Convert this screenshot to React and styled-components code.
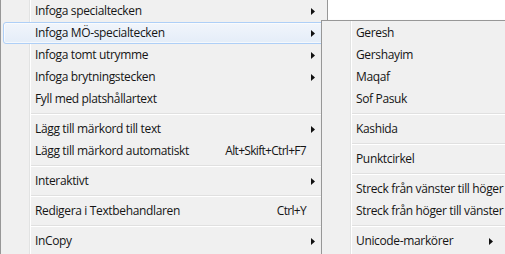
import React from "react";
import styled, { createGlobalStyle } from "styled-components";

const GlobalStyle = createGlobalStyle`
  html, body {
    margin: 0;
    padding: 0;
    background: #ffffff;
    overflow: hidden;
  }
  body {
    font-family: "Segoe UI", "Open Sans", "Noto Sans", sans-serif;
    font-size: 12px;
    letter-spacing: -0.35px;
    color: #151515;
  }
`;

const mainItems = [
  { label: "Infoga specialtecken", sub: true },
  { label: "Infoga MÖ-specialtecken", sub: true, active: true },
  { label: "Infoga tomt utrymme", sub: true },
  { label: "Infoga brytningstecken", sub: true },
  { label: "Fyll med platshållartext" },
  { sep: true },
  { label: "Lägg till märkord till text", sub: true },
  { label: "Lägg till märkord automatiskt", shortcut: "Alt+Skift+Ctrl+F7" },
  { sep: true },
  { label: "Interaktivt", sub: true },
  { sep: true },
  { label: "Redigera i Textbehandlaren", shortcut: "Ctrl+Y" },
  { sep: true },
  { label: "InCopy", sub: true },
];

const subItems = [
  { label: "Geresh" },
  { label: "Gershayim" },
  { label: "Maqaf" },
  { label: "Sof Pasuk" },
  { sep: true },
  { label: "Kashida" },
  { sep: true },
  { label: "Punktcirkel" },
  { sep: true },
  { label: "Streck från vänster till höger" },
  { label: "Streck från höger till vänster" },
  { sep: true },
  { label: "Unicode-markörer", sub: true },
];

function Arrow() {
  return (
    <ArrowIcon width="4" height="7" viewBox="0 0 4 7">
      <path d="M0 0 L4 3.5 L0 7 Z" fill="#111" />
    </ArrowIcon>
  );
}

function MenuList({ items, arrowWidth, arrowPad }) {
  return items.map((item, i) =>
    item.sep ? (
      <Separator key={i} />
    ) : (
      <Item key={i} $active={item.active}>
        <Label>{item.label}</Label>
        <Shortcut>{item.shortcut}</Shortcut>
        <ArrowCell $width={arrowWidth} $pad={arrowPad}>
          {item.sub && <Arrow />}
        </ArrowCell>
      </Item>
    )
  );
}

export default function App() {
  return (
    <>
      <GlobalStyle />
      <Screen>
        <MainMenu>
          <MenuList items={mainItems} arrowWidth={18} arrowPad={9} />
        </MainMenu>
        <SubMenu>
          <MenuList items={subItems} arrowWidth={36} arrowPad={28} />
        </SubMenu>
      </Screen>
    </>
  );
}

const Screen = styled.div`
  position: relative;
  width: 505px;
  height: 254px;
  overflow: hidden;
`;

const menuBackground = `
  background: linear-gradient(
    to right,
    #f0f0f0 28px,
    #e2e3e3 28px,
    #e2e3e3 29px,
    #ffffff 29px,
    #ffffff 30px,
    #f0f0f0 30px
  );
`;

const MainMenu = styled.div`
  width: 324px;
  height: 260px;
  border-left: 1px solid #979797;
  border-right: 1px solid #979797;
  padding: 0 1px;
  display: flex;
  flex-direction: column;
  ${menuBackground}
`;

const SubMenu = styled.div`
  position: absolute;
  left: 321px;
  top: 20px;
  width: 200px;
  height: 250px;
  border: 1px solid #979797;
  padding: 1px;
  display: flex;
  flex-direction: column;
  box-shadow: 2px 2px 3px rgba(0, 0, 0, 0.2);
  ${menuBackground}
`;

const Item = styled.div`
  box-sizing: border-box;
  height: 22px;
  margin: 0 1px;
  display: grid;
  grid-template-columns: 1fr auto auto;
  align-items: center;
  padding-left: 31px;
  border: 1px solid transparent;
  border-radius: 3px;
  white-space: nowrap;
  ${(p) =>
    p.$active &&
    `
    border-color: #aecff7;
    background: linear-gradient(#f1f5fb, #e4edf8);
    box-shadow: inset 0 0 0 1px rgba(255, 255, 255, 0.6);
  `}
`;

const Label = styled.span`
  line-height: 20px;
`;

const Shortcut = styled.span`
  line-height: 20px;
  text-align: right;
  letter-spacing: -0.7px;
`;

const ArrowCell = styled.span`
  display: flex;
  align-items: center;
  justify-content: flex-end;
  width: ${(p) => p.$width}px;
  padding-right: ${(p) => p.$pad}px;
  box-sizing: border-box;
`;

const ArrowIcon = styled.svg`
  display: block;
`;

const Separator = styled.div`
  height: 8px;
  margin-left: 29px;
  margin-right: 1px;
  display: flex;
  flex-direction: column;
  justify-content: center;
  &::before {
    content: "";
    display: block;
    height: 1px;
    background: #e0e0e0;
  }
  &::after {
    content: "";
    display: block;
    height: 1px;
    background: #ffffff;
  }
`;
